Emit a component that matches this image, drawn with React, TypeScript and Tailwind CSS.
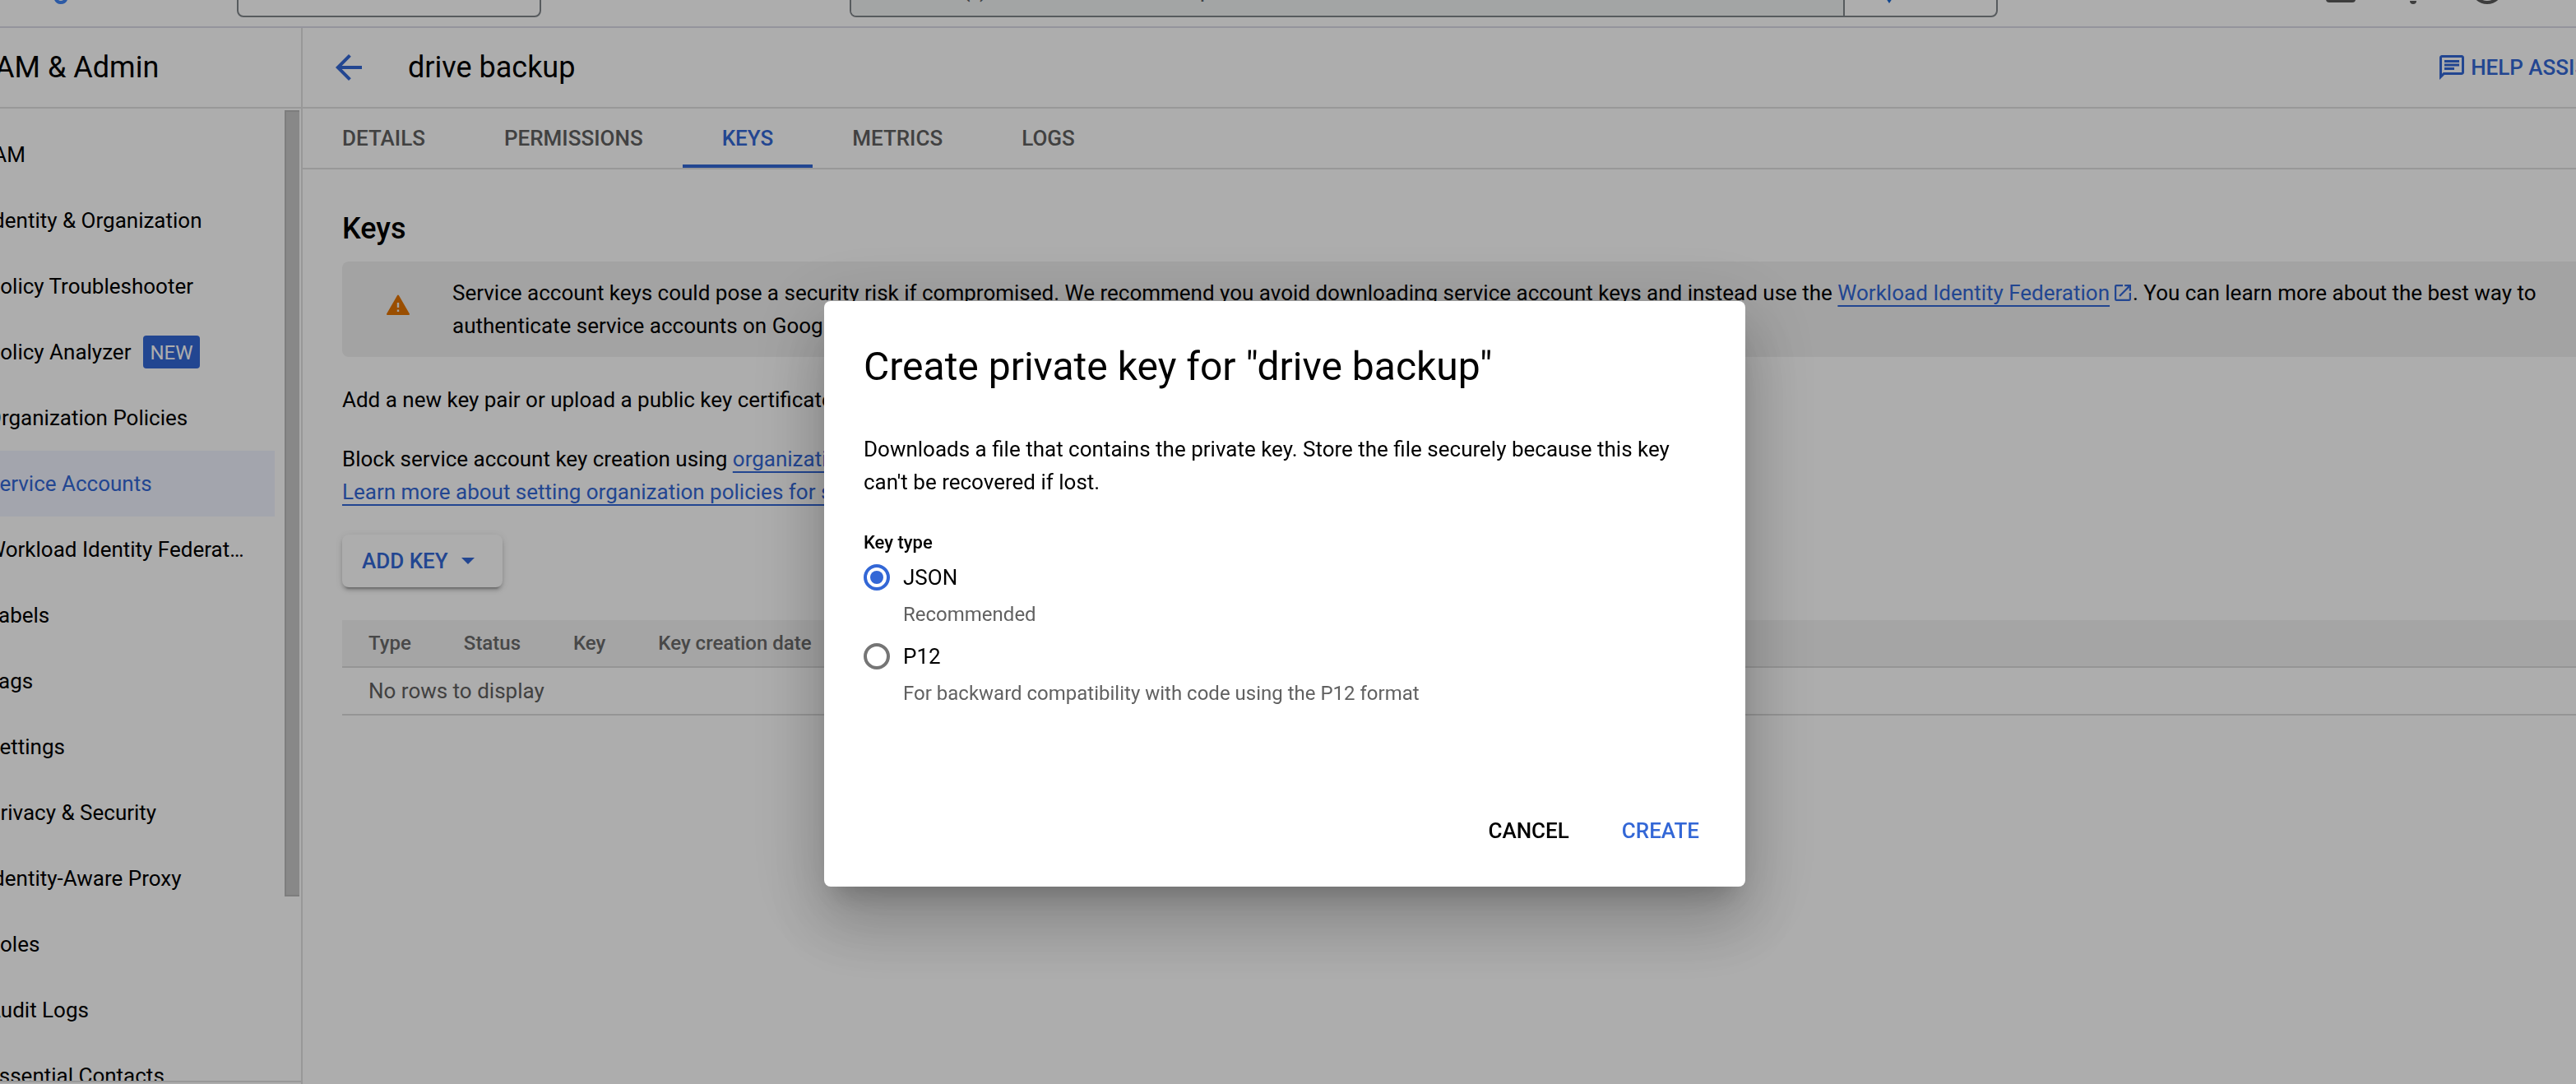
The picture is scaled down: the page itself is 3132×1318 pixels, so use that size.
import React, { useState } from 'react';

const navItems: { label: string; badge?: string; active?: boolean }[] = [
  { label: 'IAM' },
  { label: 'Identity & Organization' },
  { label: 'Policy Troubleshooter' },
  { label: 'Policy Analyzer', badge: 'NEW' },
  { label: 'Organization Policies' },
  { label: 'Service Accounts', active: true },
  { label: 'Workload Identity Federat…' },
  { label: 'Labels' },
  { label: 'Tags' },
  { label: 'Settings' },
  { label: 'Privacy & Security' },
  { label: 'Identity-Aware Proxy' },
  { label: 'Roles' },
  { label: 'Audit Logs' },
  { label: 'Essential Contacts' },
];

const tabs = ['DETAILS', 'PERMISSIONS', 'KEYS', 'METRICS', 'LOGS'];
const columns = ['Type', 'Status', 'Key', 'Key creation date', 'Key expiration date'];

const keyTypes = [
  { id: 'json', label: 'JSON', hint: 'Recommended' },
  { id: 'p12', label: 'P12', hint: 'For backward compatibility with code using the P12 format' },
];

const linkClass = 'text-[#3367d6] underline decoration-2 underline-offset-[6px]';

function TopBar() {
  return (
    <header className="flex h-[34px] shrink-0 items-end overflow-hidden border-b-2 border-[#dadae6] pb-[11px]">
      <a href="#home" aria-label="Home" className="ml-[64px] flex h-[45px] w-[224px] shrink-0">
        <svg viewBox="0 0 20 30" className="h-[30px] w-5" fill="none" stroke="#4285f4" strokeWidth="4">
          <path d="M3 20.500c1 4 3.600 6.500 6.700 6.500 4.500 0 7-2.800 7-8V2" />
          <circle cx="10" cy="9" r="7" />
        </svg>
      </a>
      <button
        aria-label="Select a project"
        className="h-[72px] w-[370px] shrink-0 rounded-lg border-2 border-[#80868b]"
      />
      <form className="ml-[375px] flex h-[72px] w-[1396px] shrink-0 overflow-hidden rounded-lg border-2 border-[#80868b]">
        <input
          aria-label="Search"
          placeholder="Search (/) for resources, docs, products, and more"
          className="min-w-0 flex-1 bg-[#f1f3f4] pt-1 pl-[42px] text-[28px] placeholder:text-[#5f6368]"
        />
        <button type="button" aria-label="Run search" className="flex w-[186px] items-center border-l-2 border-[#80868b] pl-[38px]">
          <svg viewBox="0 0 32 38" className="h-[38px] w-8" fill="#1a67d2">
            <path d="M16 0l4 6 2 9 10 4-10 4-2 9-4 6-4-6-2-9-10-4 10-4 2-9z" />
          </svg>
        </button>
      </form>
      <div className="ml-auto flex shrink-0 items-end gap-[66px] pr-[88px]">
        <button aria-label="Cloud Shell">
          <svg viewBox="0 0 36 50" className="h-[50px] w-9" fill="#5a5a5a">
            <path d="M4 0h28a4 4 0 014 4v24a4 4 0 01-4 4H4a4 4 0 01-4-4V4a4 4 0 014-4zm0 8v18h28V8z" />
          </svg>
        </button>
        <button aria-label="Notifications">
          <svg viewBox="0 0 8 50" className="h-[50px] w-2" fill="#5a5a5a">
            <path d="M0 30h8a4 4 0 01-8 0z" />
          </svg>
        </button>
        <button aria-label="Help">
          <svg viewBox="0 0 40 56" className="h-14 w-10" fill="none" stroke="#5a5a5a" strokeWidth="4">
            <circle cx="20" cy="20" r="18" />
          </svg>
        </button>
      </div>
    </header>
  );
}

function Sidebar() {
  return (
    <aside className="flex w-[368px] shrink-0 flex-col overflow-hidden border-r-2 border-[#e0e0e0]">
      <div className="flex h-[98px] shrink-0 items-center border-b-2 border-[#e0e0e0]">
        <h2 className="-ml-4 text-4xl whitespace-nowrap">IAM &amp; Admin</h2>
      </div>
      <div className="flex min-h-0 flex-1 justify-between">
        <nav aria-label="IAM & Admin" className="w-[334px] overflow-hidden pt-4">
          {navItems.map((item) => (
            <a
              key={item.label}
              href="#nav"
              aria-current={item.active ? 'page' : undefined}
              className={
                item.active
                  ? 'flex h-20 items-center bg-[#f0f4ff] text-[#3367d6]'
                  : 'flex h-20 items-center'
              }
            >
              <span className="-ml-4 whitespace-nowrap">{item.label}</span>
              {item.badge && (
                <span className="ml-[15px] flex h-10 items-center rounded bg-[#3367d6] px-2 pt-0.5 text-2xl text-white">
                  {item.badge}
                </span>
              )}
            </a>
          ))}
        </nav>
        <div className="mt-0.5 mr-0.5 h-[956px] w-[18px] border-2 border-r-0 border-[#b9b9b9] bg-[#c9c9c9]" />
      </div>
      <div className="h-1 shrink-0 border-t-2 border-[#e0e0e0]" />
    </aside>
  );
}

function PageHeader() {
  return (
    <div className="flex h-[98px] shrink-0 items-center overflow-hidden border-b-2 border-[#e0e0e0] pl-10">
      <button aria-label="Back" className="shrink-0">
        <svg viewBox="4 4 16 16" className="h-8 w-8" fill="#3367d6">
          <path d="M20 11H7.830l5.590-5.590L12 4l-8 8 8 8 1.410-1.410L7.830 13H20v-2z" />
        </svg>
      </button>
      <h1 className="ml-14 shrink-0 text-4xl">drive backup</h1>
      <button className="-mr-20 ml-auto flex shrink-0 items-center gap-2 font-medium text-[#3367d6]">
        <svg viewBox="2 2 20 20" className="h-[30px] w-[30px]" fill="#3367d6">
          <path d="M4 4h16v12H5.170L4 17.170V4m0-2c-1.100 0-1.990.900-1.990 2L2 22l4-4h14c1.100 0 2-.900 2-2V4c0-1.100-.900-2-2-2H4zm2 10h8v2H6v-2zm0-3h12v2H6V9zm0-3h12v2H6V6z" />
        </svg>
        HELP ASSISTANT
      </button>
    </div>
  );
}

function KeysPanel() {
  return (
    <section className="flex flex-col pt-[50px] pl-12">
      <h2 className="text-4xl leading-[44px] font-medium">Keys</h2>
      <div className="mt-[18px] flex rounded-l-lg bg-[#f0f0f0] py-[18px] pr-6 leading-10">
        <svg viewBox="0 0 28 25" className="mt-[22px] mr-[52px] ml-[54px] h-[25px] w-7 shrink-0">
          <path d="M14 1.500L27 24H1z" fill="#e37400" stroke="#e37400" strokeWidth="2" strokeLinejoin="round" />
          <path d="M12.800 10h2.400v6h-2.400zM12.800 18.500h2.400v2.500h-2.400z" fill="#f0f0f0" />
        </svg>
        <p>
          Service account keys could pose a security risk if compromised. We recommend you avoid downloading
          service account keys and instead use the{' '}
          <a href="#wif" className={linkClass}>Workload Identity Federation</a>
          <svg viewBox="3 3 18 18" className="mr-0.5 ml-1.5 inline h-5 w-5 align-[-1px]" fill="#3367d6">
            <path d="M19 19H5V5h7V3H5a2 2 0 00-2 2v14a2 2 0 002 2h14c1.100 0 2-.900 2-2v-7h-2v7zM14 3v2h3.590l-9.830 9.830 1.410 1.410L19 6.410V10h2V3h-7z" />
          </svg>
          . You can learn more about the best way to authenticate service accounts on Google Cloud{' '}
          <a href="#auth" className={linkClass}>here</a>.
        </p>
      </div>
      <p className="mt-8 leading-10">
        Add a new key pair or upload a public key certificate from an existing key pair.
      </p>
      <p className="mt-8 leading-10">
        Block service account key creation using{' '}
        <a href="#policies" className={linkClass}>organization policies</a>.
        <br />
        <a href="#learn" className={linkClass}>
          Learn more about setting organization policies for service accounts
        </a>
      </p>
      <button className="mt-8 flex h-16 items-center gap-4 self-start rounded-lg bg-white pr-[34px] pl-6 font-medium text-[#3367d6] shadow-[0_6px_2px_-4px_rgba(0,0,0,0.2),0_4px_4px_0_rgba(0,0,0,0.14),0_2px_10px_0_rgba(0,0,0,0.12)]">
        ADD KEY
        <svg viewBox="0 0 16 8" className="h-2 w-4" fill="#3367d6">
          <path d="M0 0h16l-8 8z" />
        </svg>
      </button>
      <table className="mt-10 w-full border-separate border-spacing-0 text-left">
        <thead>
          <tr className="h-[58px] bg-[#f3f3f3] text-2xl text-[#6b6b6b]">
            {columns.map((c) => (
              <th key={c} className="border-b-2 border-[#dcdcdc] px-8 font-medium whitespace-nowrap">{c}</th>
            ))}
            <th className="w-full border-b-2 border-[#dcdcdc]" />
          </tr>
        </thead>
        <tbody>
          <tr className="h-[58px] text-[#616161]">
            <td colSpan={6} className="border-b-2 border-[#dcdcdc] px-8">No rows to display</td>
          </tr>
        </tbody>
      </table>
    </section>
  );
}

function CreateKeyDialog() {
  const [keyType, setKeyType] = useState('json');
  return (
    <div className="fixed inset-0 flex items-start justify-center bg-black/32 pt-[366px] pr-2">
      <div
        role="dialog"
        aria-modal="true"
        aria-labelledby="dialog-title"
        className="flex w-[1120px] flex-col rounded-lg bg-white px-12 pt-12 pb-9 shadow-[0_22px_30px_-14px_rgba(0,0,0,0.2),0_48px_76px_6px_rgba(0,0,0,0.14),0_18px_92px_16px_rgba(0,0,0,0.12)]"
      >
        <h2 id="dialog-title" className="text-5xl leading-[64px]">
          Create private key for "drive backup"
        </h2>
        <p className="mt-12 leading-10">
          Downloads a file that contains the private key. Store the file securely because this key can't be
          recovered if lost.
        </p>
        <fieldset className="mt-10">
          <legend className="pb-1 text-[22px] leading-7 font-medium">Key type</legend>
          {keyTypes.map((k) => (
            <div key={k.id} className="mb-2">
              <div className="flex h-12 items-center gap-4">
                <input
                  type="radio"
                  name="key-type"
                  id={k.id}
                  checked={keyType === k.id}
                  onChange={() => setKeyType(k.id)}
                  className="flex h-8 w-8 appearance-none items-center justify-center rounded-full border-4 border-[#757575] checked:border-[#3367d6] checked:before:h-4 checked:before:w-4 checked:before:rounded-full checked:before:bg-[#3367d6]"
                />
                <label htmlFor={k.id}>{k.label}</label>
              </div>
              <p className="pt-0.5 pl-12 text-2xl leading-[38px] text-[#616161]">{k.hint}</p>
            </div>
          ))}
        </fieldset>
        <div className="mt-[108px] flex h-16 items-center justify-end gap-16 pr-2 font-medium">
          <button>CANCEL</button>
          <button className="text-[#3367d6]">CREATE</button>
        </div>
      </div>
    </div>
  );
}

export default function App() {
  return (
    <div className="flex h-screen flex-col overflow-hidden bg-white font-[Roboto,sans-serif] text-[26px] text-black">
      <TopBar />
      <div className="flex min-h-0 flex-1">
        <Sidebar />
        <main className="min-w-0 flex-1 overflow-hidden">
          <PageHeader />
          <div role="tablist" className="flex h-[74px] border-b-2 border-[#e0e0e0] font-medium text-[#616161]">
            {tabs.map((t) => (
              <button
                key={t}
                role="tab"
                aria-selected={t === 'KEYS'}
                className={
                  t === 'KEYS'
                    ? 'border-b-4 border-[#3367d6] px-12 pt-1 text-[#3367d6]'
                    : 'border-b-4 border-transparent px-12 pt-1'
                }
              >
                {t}
              </button>
            ))}
          </div>
          <KeysPanel />
        </main>
      </div>
      <CreateKeyDialog />
    </div>
  );
}
